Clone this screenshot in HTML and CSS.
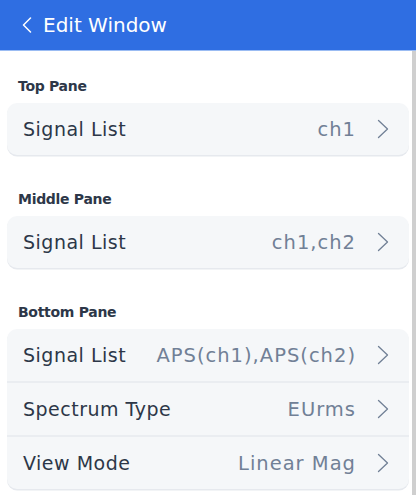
FILE: index.html
```html
<!DOCTYPE html>
<html>
<head>
<meta charset="utf-8">
<link rel="stylesheet" href="styles.css">
</head>
<body>
<header class="topbar">
  <svg class="back" width="10" height="16" viewBox="0 0 10 16"><path d="M8.5 1 L1.5 8 L8.5 15" fill="none" stroke="#fff" stroke-width="1.5" stroke-linecap="round" stroke-linejoin="round"/></svg>
  <span class="title">Edit Window</span>
</header>
<div class="scrollarea">
  <main class="content">
    <section class="group">
      <div class="label">Top Pane</div>
      <div class="card">
        <div class="row"><span class="name">Signal List</span><span class="value">ch1</span><svg class="chev" width="12" height="20" viewBox="0 0 12 20"><path d="M1.5 1.5 L10.5 10 L1.5 18.5" fill="none" stroke="#718096" stroke-width="1.3" stroke-linecap="round" stroke-linejoin="round"/></svg></div>
      </div>
    </section>
    <section class="group">
      <div class="label">Middle Pane</div>
      <div class="card">
        <div class="row"><span class="name">Signal List</span><span class="value">ch1,ch2</span><svg class="chev" width="12" height="20" viewBox="0 0 12 20"><path d="M1.5 1.5 L10.5 10 L1.5 18.5" fill="none" stroke="#718096" stroke-width="1.3" stroke-linecap="round" stroke-linejoin="round"/></svg></div>
      </div>
    </section>
    <section class="group">
      <div class="label">Bottom Pane</div>
      <div class="card">
        <div class="row"><span class="name">Signal List</span><span class="value">APS(ch1),APS(ch2)</span><svg class="chev" width="12" height="20" viewBox="0 0 12 20"><path d="M1.5 1.5 L10.5 10 L1.5 18.5" fill="none" stroke="#718096" stroke-width="1.3" stroke-linecap="round" stroke-linejoin="round"/></svg></div>
        <div class="row"><span class="name">Spectrum Type</span><span class="value">EUrms</span><svg class="chev" width="12" height="20" viewBox="0 0 12 20"><path d="M1.5 1.5 L10.5 10 L1.5 18.5" fill="none" stroke="#718096" stroke-width="1.3" stroke-linecap="round" stroke-linejoin="round"/></svg></div>
        <div class="row"><span class="name">View Mode</span><span class="value">Linear Mag</span><svg class="chev" width="12" height="20" viewBox="0 0 12 20"><path d="M1.5 1.5 L10.5 10 L1.5 18.5" fill="none" stroke="#718096" stroke-width="1.3" stroke-linecap="round" stroke-linejoin="round"/></svg></div>
      </div>
    </section>
  </main>
  <div class="scrollbar"></div>
</div>
</body>
</html>
```
FILE: styles.css
```css
html, body {
  margin: 0;
  padding: 0;
  background: #ffffff;
  font-family: "DejaVu Sans", sans-serif;
  overflow: hidden;
}
.topbar {
  height: 51px;
  background: #2f6ee2;
  border-bottom: 1px solid #9bbcf3;
  display: flex;
  align-items: center;
  padding-left: 22px;
  box-sizing: border-box;
}
.back {
  margin-right: 11px;
}
.title {
  color: #ffffff;
  font-size: 20px;
}
.scrollarea {
  display: flex;
  height: 446px;
}
.content {
  flex: 1;
  padding: 0 3px 0 7px;
}
.scrollbar {
  width: 4px;
  background: #cfcfcf;
  height: 444px;
}
.group {
  display: flex;
  flex-direction: column;
}
.group + .group {
  margin-top: 9px;
}
.label {
  font-size: 14px;
  font-weight: bold;
  color: #2d3748;
  padding: 28px 0 10px 11px;
  line-height: 14px;
  letter-spacing: -0.3px;
}
.card {
  background: #f5f7f9;
  border-radius: 10px;
  box-shadow: 0 1.5px 0 #e6e9ee;
  overflow: hidden;
}
.row {
  height: 52px;
  display: flex;
  align-items: center;
  padding: 0 20px 0 16px;
  box-sizing: border-box;
}
.row + .row {
  border-top: 2px solid #eaedf1;
  height: 54px;
}
.name {
  font-size: 19px;
  color: #2d3748;
  flex: 1;
  white-space: nowrap;
  letter-spacing: 0.5px;
}
.value {
  font-size: 19.5px;
  color: #718096;
  margin-right: 21px;
  letter-spacing: 1px;
  white-space: nowrap;
}
.chev {
  flex: none;
}
```
